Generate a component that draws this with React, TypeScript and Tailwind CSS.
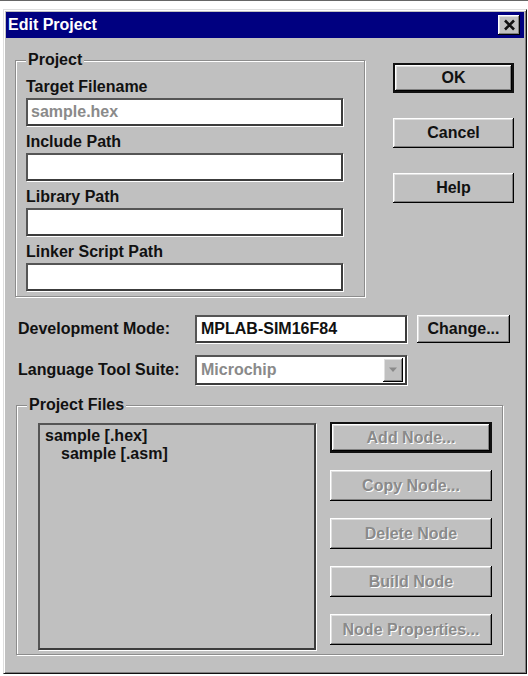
import React from "react"

const raised =
  "shadow-[inset_-1px_-1px_0_#000,inset_1px_1px_0_#fff,inset_-2px_-2px_0_#808080,inset_2px_2px_0_#dfdfdf]"
const sunken = "border-2 border-t-[#555] border-l-[#555] border-b-[#3c3c3c] border-r-[#3c3c3c] shadow-[1px_1px_0_#fff]"
const disabledText = "text-[#8a8a8a] [text-shadow:1px_1px_0_#fff]"

function Button({ label, def, disabled, className = "" }: { label: string; def?: boolean; disabled?: boolean; className?: string }) {
  return (
    <button
      className={`${className} flex items-center justify-center bg-[#c0c0c0] ${raised} ${def ? "border-[2px] border-[#111]" : ""} ${disabled ? disabledText : "text-[#111]"} leading-none`}
    >
      {label}
    </button>
  )
}

function Group({ title, className = "", children }: { title: string; className?: string; children: React.ReactNode }) {
  return (
    <div className={`relative border border-[#8c8c8c] shadow-[inset_1px_1px_0_#fff,1px_1px_0_#fff] ${className}`}>
      <span className="absolute left-[10px] -top-[10px] px-[2px] bg-[#c0c0c0] leading-[18px]">{title}</span>
      {children}
    </div>
  )
}

function Field({ label, value }: { label: string; value?: string }) {
  return (
    <div className="flex flex-col">
      <span className="leading-[18px]">{label}</span>
      <div className={`mt-[2px] h-[28px] w-[317px] bg-white ${sunken} flex items-center pl-[3px] text-[#8a8a8a]`}>
        {value}
      </div>
    </div>
  )
}

export default function App() {
  return (
    <div className="font-['Liberation_Sans',Arial,sans-serif] font-bold text-[16px] text-[#111] bg-white w-[528px] h-[676px]">
      <div className="h-[1px] bg-[#666]" />
      <div className="ml-[3px] mt-[8px] w-[524px] h-[665px] bg-[#c0c0c0] border border-t-[#dfdfdf] border-l-[#dfdfdf] border-b-[#111] border-r-[#111] p-[2px] shadow-[inset_1px_1px_0_#fff,inset_-1px_-1px_0_#808080] flex flex-col">
        {/* title bar */}
        <div className="h-[26px] bg-[#000080] flex items-center justify-between pl-[2px] pr-[4px]">
          <span className="text-white leading-none">Edit Project</span>
          <div className={`w-[22px] h-[20px] bg-[#c0c0c0] ${raised} flex items-center justify-center`}>
            <svg width="13" height="12" viewBox="0 0 13 12">
              <path d="M2 1.5 L11 10.5 M11 1.5 L2 10.5" stroke="#111" strokeWidth="2.6" />
            </svg>
          </div>
        </div>

        {/* body */}
        <div className="flex flex-col pl-[9px] pt-[22px]">
          <div className="flex">
            <Group title="Project" className="w-[350px] h-[237px] pl-[10px] pt-[17px]">
              <div className="flex flex-col gap-[7px]">
                <Field label="Target Filename" value="sample.hex" />
                <Field label="Include Path" />
                <Field label="Library Path" />
                <Field label="Linker Script Path" />
              </div>
            </Group>
            <div className="ml-[28px] pt-[3px] flex flex-col gap-[25px]">
              <Button label="OK" def className="w-[121px] h-[30px]" />
              <Button label="Cancel" className="w-[121px] h-[30px]" />
              <Button label="Help" className="w-[121px] h-[30px]" />
            </div>
          </div>

          <div className="mt-[18px] flex items-center">
            <span className="ml-[3px] w-[177px] leading-[18px]">Development Mode:</span>
            <div className={`w-[212px] h-[28px] bg-white ${sunken} flex items-center pl-[4px]`}>MPLAB-SIM16F84</div>
            <Button label="Change..." className="ml-[10px] w-[93px] h-[28px]" />
          </div>

          <div className="mt-[12px] flex items-center">
            <span className="ml-[3px] w-[177px] leading-[18px]">Language Tool Suite:</span>
            <div className={`w-[212px] h-[30px] bg-white ${sunken} flex items-center justify-between pl-[4px] pr-[2px]`}>
              <span className="text-[#8a8a8a]">Microchip</span>
              <div className={`w-[20px] h-[24px] bg-[#c0c0c0] ${raised} flex items-center justify-center`}>
                <svg width="10" height="6" viewBox="0 0 10 6">
                  <path d="M1 0.5 L9 0.5 L5 5 Z" fill="#8a8a8a" />
                </svg>
              </div>
            </div>
          </div>

          <Group title="Project Files" className="mt-[20px] ml-[1px] w-[487px] h-[250px] flex pl-[21px] pt-[17px]">
            <div className={`w-[278px] h-[227px] bg-[#c0c0c0] ${sunken} pl-[5px] pt-[2px] leading-[18px]`}>
              <div>sample [.hex]</div>
              <div className="pl-[16px]">sample [.asm]</div>
            </div>
            <div className="ml-[14px] -mt-[1px] flex flex-col gap-[17px]">
              <Button label="Add Node..." def disabled className="w-[162px] h-[31px]" />
              <Button label="Copy Node..." disabled className="w-[162px] h-[31px]" />
              <Button label="Delete Node" disabled className="w-[162px] h-[31px]" />
              <Button label="Build Node" disabled className="w-[162px] h-[31px]" />
              <Button label="Node Properties..." disabled className="w-[162px] h-[31px]" />
            </div>
          </Group>
        </div>
      </div>
    </div>
  )
}
